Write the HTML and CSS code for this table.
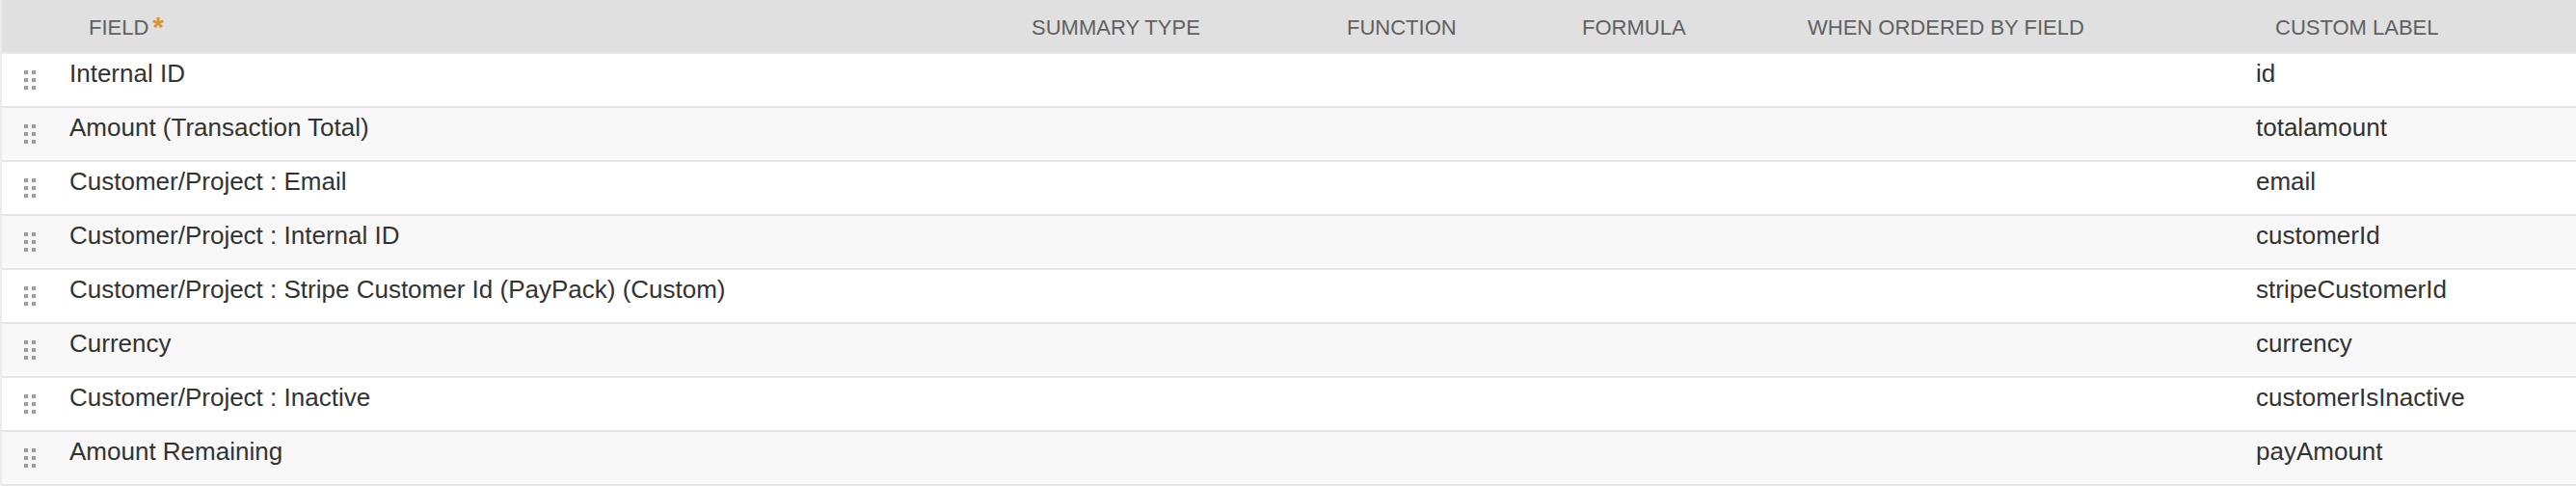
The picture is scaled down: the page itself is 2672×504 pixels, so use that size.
FILE: index.html
```html
<!DOCTYPE html>
<html>
<head>
<meta charset="utf-8">
<link rel="stylesheet" href="styles.css">
</head>
<body>
<div class="grid">
  <div class="row head">
    <div class="cell handle"></div>
    <div class="cell">FIELD<span class="req">*</span></div>
    <div class="cell">SUMMARY TYPE</div>
    <div class="cell">FUNCTION</div>
    <div class="cell">FORMULA</div>
    <div class="cell">WHEN ORDERED BY FIELD</div>
    <div class="cell">CUSTOM LABEL</div>
  </div>

  <div class="row">
    <div class="cell handle"><svg class="dots" width="12" height="20" viewBox="0 0 12 20"><rect x="0" y="0" width="4" height="4"/><rect x="8" y="0" width="4" height="4"/><rect x="0" y="8" width="4" height="4"/><rect x="8" y="8" width="4" height="4"/><rect x="0" y="16" width="4" height="4"/><rect x="8" y="16" width="4" height="4"/></svg></div>
    <div class="cell">Internal ID</div>
    <div class="cell"></div><div class="cell"></div><div class="cell"></div><div class="cell"></div>
    <div class="cell">id</div>
  </div>

  <div class="row">
    <div class="cell handle"><svg class="dots" width="12" height="20" viewBox="0 0 12 20"><rect x="0" y="0" width="4" height="4"/><rect x="8" y="0" width="4" height="4"/><rect x="0" y="8" width="4" height="4"/><rect x="8" y="8" width="4" height="4"/><rect x="0" y="16" width="4" height="4"/><rect x="8" y="16" width="4" height="4"/></svg></div>
    <div class="cell">Amount (Transaction Total)</div>
    <div class="cell"></div><div class="cell"></div><div class="cell"></div><div class="cell"></div>
    <div class="cell">totalamount</div>
  </div>

  <div class="row">
    <div class="cell handle"><svg class="dots" width="12" height="20" viewBox="0 0 12 20"><rect x="0" y="0" width="4" height="4"/><rect x="8" y="0" width="4" height="4"/><rect x="0" y="8" width="4" height="4"/><rect x="8" y="8" width="4" height="4"/><rect x="0" y="16" width="4" height="4"/><rect x="8" y="16" width="4" height="4"/></svg></div>
    <div class="cell">Customer/Project : Email</div>
    <div class="cell"></div><div class="cell"></div><div class="cell"></div><div class="cell"></div>
    <div class="cell">email</div>
  </div>

  <div class="row">
    <div class="cell handle"><svg class="dots" width="12" height="20" viewBox="0 0 12 20"><rect x="0" y="0" width="4" height="4"/><rect x="8" y="0" width="4" height="4"/><rect x="0" y="8" width="4" height="4"/><rect x="8" y="8" width="4" height="4"/><rect x="0" y="16" width="4" height="4"/><rect x="8" y="16" width="4" height="4"/></svg></div>
    <div class="cell">Customer/Project : Internal ID</div>
    <div class="cell"></div><div class="cell"></div><div class="cell"></div><div class="cell"></div>
    <div class="cell">customerId</div>
  </div>

  <div class="row">
    <div class="cell handle"><svg class="dots" width="12" height="20" viewBox="0 0 12 20"><rect x="0" y="0" width="4" height="4"/><rect x="8" y="0" width="4" height="4"/><rect x="0" y="8" width="4" height="4"/><rect x="8" y="8" width="4" height="4"/><rect x="0" y="16" width="4" height="4"/><rect x="8" y="16" width="4" height="4"/></svg></div>
    <div class="cell">Customer/Project : Stripe Customer Id (PayPack) (Custom)</div>
    <div class="cell"></div><div class="cell"></div><div class="cell"></div><div class="cell"></div>
    <div class="cell">stripeCustomerId</div>
  </div>

  <div class="row">
    <div class="cell handle"><svg class="dots" width="12" height="20" viewBox="0 0 12 20"><rect x="0" y="0" width="4" height="4"/><rect x="8" y="0" width="4" height="4"/><rect x="0" y="8" width="4" height="4"/><rect x="8" y="8" width="4" height="4"/><rect x="0" y="16" width="4" height="4"/><rect x="8" y="16" width="4" height="4"/></svg></div>
    <div class="cell">Currency</div>
    <div class="cell"></div><div class="cell"></div><div class="cell"></div><div class="cell"></div>
    <div class="cell">currency</div>
  </div>

  <div class="row">
    <div class="cell handle"><svg class="dots" width="12" height="20" viewBox="0 0 12 20"><rect x="0" y="0" width="4" height="4"/><rect x="8" y="0" width="4" height="4"/><rect x="0" y="8" width="4" height="4"/><rect x="8" y="8" width="4" height="4"/><rect x="0" y="16" width="4" height="4"/><rect x="8" y="16" width="4" height="4"/></svg></div>
    <div class="cell">Customer/Project : Inactive</div>
    <div class="cell"></div><div class="cell"></div><div class="cell"></div><div class="cell"></div>
    <div class="cell">customerIsInactive</div>
  </div>

  <div class="row">
    <div class="cell handle"><svg class="dots" width="12" height="20" viewBox="0 0 12 20"><rect x="0" y="0" width="4" height="4"/><rect x="8" y="0" width="4" height="4"/><rect x="0" y="8" width="4" height="4"/><rect x="8" y="8" width="4" height="4"/><rect x="0" y="16" width="4" height="4"/><rect x="8" y="16" width="4" height="4"/></svg></div>
    <div class="cell">Amount Remaining</div>
    <div class="cell"></div><div class="cell"></div><div class="cell"></div><div class="cell"></div>
    <div class="cell">payAmount</div>
  </div>
</div>
</body>
</html>
```
FILE: styles.css
```css
html, body {
  margin: 0;
  padding: 0;
  background: #ffffff;
}

.grid {
  width: 2672px;
  border-left: 2px solid #ececec;
  box-sizing: border-box;
  font-family: "Liberation Sans", Arial, Helvetica, sans-serif;
}

.row {
  display: grid;
  grid-template-columns: 70px 978px 327px 244px 234px 485px 1fr;
  height: 56px;
  box-sizing: border-box;
  border-bottom: 2px solid #e6e6e6;
  background: #ffffff;
  font-size: 26px;
  line-height: 30px;
  color: #333333;
}

.row:nth-child(odd) {
  background: #f8f8f8;
}

.row .cell {
  padding-top: 5px;
  white-space: nowrap;
}

.row .handle {
  padding-top: 17px;
  padding-left: 23px;
}

.dots {
  display: block;
  fill: #9c9c9c;
}

.row.head {
  background: #e0e0e0;
  border-bottom: 2px solid #e9e9e9;
  font-size: 22px;
  line-height: 50px;
  color: #606060;
}

.row.head .cell {
  padding-top: 4px;
  padding-left: 20px;
}

.row.head .handle {
  padding-left: 0;
}

.req {
  color: #e0922a;
  font-size: 30px;
  font-weight: bold;
  vertical-align: -2px;
  line-height: 0;
  margin-left: 4px;
}
```
